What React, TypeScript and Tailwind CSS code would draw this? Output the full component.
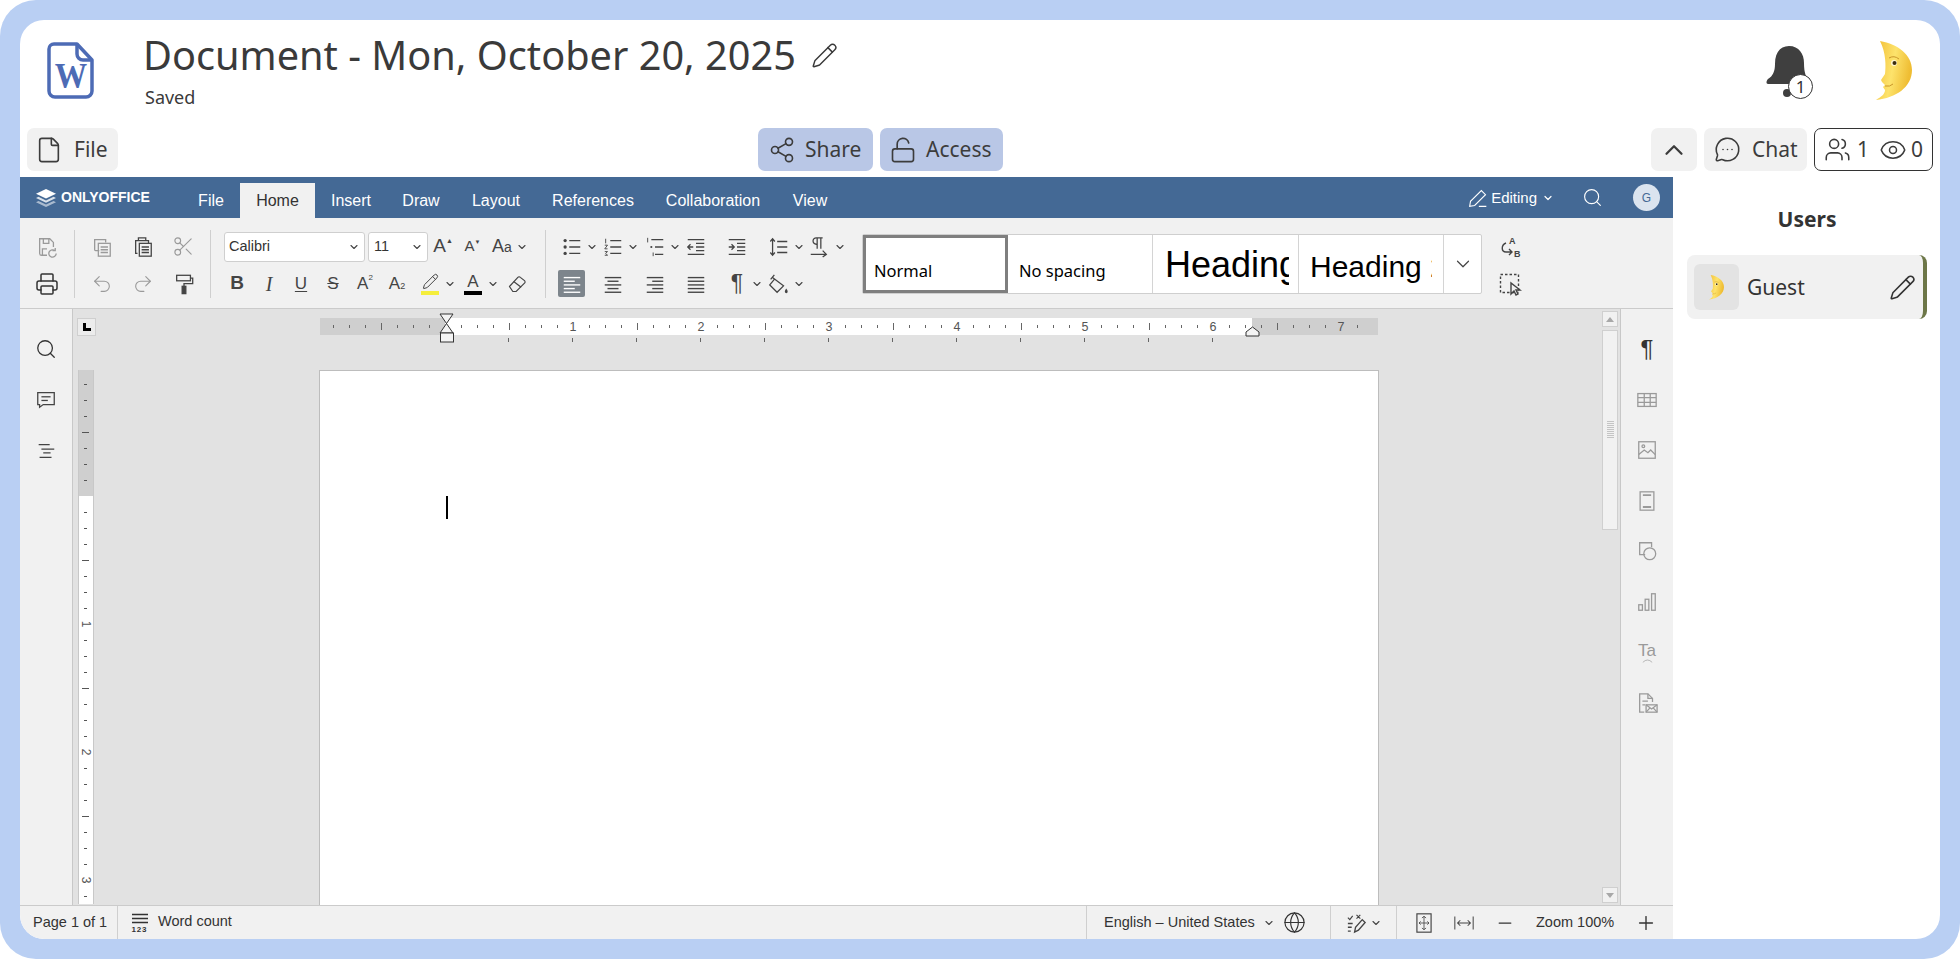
import type { ReactNode } from "react";
import {
  ChevronDown,
  ChevronUp,
  Eye,
  File,
  Globe,
  LockOpen,
  MessageCircleMore,
  Minus,
  Pencil,
  Plus,
  Printer,
  Redo2,
  Scissors,
  Search,
  Share2,
  Undo2,
  Users,
} from "lucide-react";

const sans = "font-['Liberation_Sans',Arial,sans-serif]";

function Moon({ className }: { className: string }) {
  return (
    <svg viewBox="0 0 36 60" className={className}>
      <defs>
        <linearGradient id="moonfill" x1="0" y1="0" x2="1" y2="0.3">
          <stop offset="0" stopColor="#f2bd33" />
          <stop offset="0.55" stopColor="#fde36c" />
          <stop offset="1" stopColor="#efbd33" />
        </linearGradient>
      </defs>
      <path
        d="M4 0C22 3 36 14 36 29C36 46 20 57 0 59C5 56 9 53 9 49L7 46L9 44L6 41L5 39L9 33C10 25 10 12 4 0Z"
        fill="url(#moonfill)"
      />
      <circle cx="18" cy="22" r="3" fill="#fff6d0" />
      <circle cx="18.5" cy="22" r="2" fill="#3a2c10" />
      <path d="M13 17Q18 14 23 18" stroke="#c9962a" strokeWidth="1" fill="none" />
      <path d="M9 45Q14 46 17 43" stroke="#c9962a" strokeWidth="1" fill="none" />
    </svg>
  );
}

function WordIcon() {
  return (
    <div className="relative w-[47px] h-[57px]">
      <svg viewBox="0 0 47 57" className="w-[47px] h-[57px]" fill="none" stroke="#4d6bb5" strokeWidth="3.5" strokeLinejoin="round">
        <path d="M7 2H30L45 18V49A6 6 0 0 1 39 55H8A6 6 0 0 1 2 49V7A5 5 0 0 1 7 2Z" />
        <path d="M30 2V12A6 6 0 0 0 36 18H45" />
      </svg>
      <span className="absolute left-[6px] top-[16px] scale-x-90 font-['Liberation_Serif',serif] font-bold text-[36px] leading-[36px] text-[#4d6bb5]">
        W
      </span>
    </div>
  );
}

function Bell() {
  return (
    <div className="relative w-[48px] h-[54px]">
      <svg viewBox="0 0 48 54" className="w-[48px] h-[54px]">
        <path
          d="M23 0C33 0 38 8 38 17C38 27 40 32 44 36V38H2C0 38 0 35 2 33C7 30 9 25 9 18C9 7 14 0 23 0Z"
          fill="#3f3f3f"
        />
        <circle cx="21" cy="47" r="4" fill="#3f3f3f" />
      </svg>
      <span className="absolute left-[22px] top-[28px] w-[25px] h-[25px] rounded-full bg-white border border-[#333] flex items-center justify-center text-[17px] leading-none text-[#333] font-['Noto_Sans',sans-serif]">
        1
      </span>
    </div>
  );
}

function HeadButton({ children, className }: { children: ReactNode; className: string }) {
  return (
    <button className={`h-[43px] rounded-[7px] flex items-center text-[21px] text-[#3c3c3c] ${className}`}>{children}</button>
  );
}

function Chev() {
  return (
    <span className="w-[10px] flex justify-center shrink-0">
      <ChevronDown size={12} strokeWidth={2.2} className="text-[#444] shrink-0" />
    </span>
  );
}

function Cell({ children, className = "w-[30px]" }: { children: ReactNode; className?: string }) {
  return <span className={`h-[37px] flex items-center justify-center shrink-0 text-[#444] ${sans} ${className}`}>{children}</span>;
}

function Svg({ children, size = 22, gray = false }: { children: ReactNode; size?: number; gray?: boolean }) {
  return (
    <svg
      viewBox="0 0 24 24"
      width={size}
      height={size}
      fill="none"
      stroke={gray ? "#9a9a9a" : "#444"}
      strokeWidth="1.4"
      className="shrink-0"
    >
      {children}
    </svg>
  );
}

function Lines({ x, rows, w }: { x: number; rows: number[]; w: number }) {
  return (
    <>
      {rows.map((y) => (
        <path key={y} d={`M${x} ${y}h${w}`} />
      ))}
    </>
  );
}

function AlignIcon({ kind, active }: { kind: "left" | "center" | "right" | "justify"; active?: boolean }) {
  const rows = [5, 9, 13, 17, 21];
  const width = [18, 12, 18, 12, 18];
  return (
    <svg viewBox="0 0 24 24" width={22} height={22} fill="none" stroke={active ? "#fff" : "#444"} strokeWidth="1.5">
      {rows.map((y, i) => {
        const w = kind === "justify" ? 18 : width[i];
        const x = kind === "left" ? 3 : kind === "right" ? 21 - w : 12 - w / 2;
        return <path key={y} d={`M${x} ${y}h${w}`} />;
      })}
    </svg>
  );
}

function Separator() {
  return <div className="w-px h-[68px] mt-[2px] bg-[#cfcfcf] shrink-0" />;
}

function Toolbar() {
  return (
    <div className="h-[91px] shrink-0 bg-[#f1f1f1] border-b border-[#cbcbcb] flex items-start pt-[10px]">
      {/* save / print */}
      <div className="w-[54px] flex flex-col items-center">
        <Cell>
          <Svg gray>
            <path d="M12 21H6a2 2 0 0 1-2-2V3h11l4 4v5" />
            <path d="M8 3v5h6V3M7 21v-7h5" />
            <path d="M22 19a4 4 0 1 1-1.2-2.8M21 13v3h-3" />
          </Svg>
        </Cell>
        <Cell>
          <Printer size={24} strokeWidth={1.5} className="text-[#333]" />
        </Cell>
      </div>
      <Separator />

      {/* clipboard */}
      <div className="w-[135px] pl-[6px] grid grid-cols-[41px_41px_41px]">
        <Cell className="w-[41px]">
          <Svg gray>
            <path d="M9 16H5a1 1 0 0 1-1-1V4h12v3" />
            <rect x="8" y="8" width="13" height="14" />
            <Lines x={10.5} rows={[12, 15, 18]} w={8} />
          </Svg>
        </Cell>
        <Cell className="w-[41px]">
          <Svg>
            <path d="M6 19H4V5h14v3" />
            <path d="M7 5V2h8v3" />
            <rect x="8" y="8" width="13" height="14" />
            <Lines x={10.5} rows={[12, 15, 18]} w={8} />
          </Svg>
        </Cell>
        <Cell className="w-[41px]">
          <Scissors size={23} strokeWidth={1.2} className="text-[#9a9a9a]" />
        </Cell>
        <Cell className="w-[41px]">
          <Undo2 size={22} strokeWidth={1.2} className="text-[#9a9a9a]" />
        </Cell>
        <Cell className="w-[41px]">
          <Redo2 size={22} strokeWidth={1.2} className="text-[#9a9a9a]" />
        </Cell>
        <Cell className="w-[41px]">
          <Svg>
            <rect x="4" y="2.5" width="15" height="6" />
            <path d="M19 5.5h2.5v6H12v3" />
            <rect x="10" y="14.5" width="4" height="8" fill="#444" />
          </Svg>
        </Cell>
      </div>
      <Separator />

      {/* font */}
      <div className="w-[334px] flex flex-col">
        <div className="flex items-center h-[37px]">
          <div className="ml-[13px] w-[141px] h-[30px] bg-white border border-[#cfcfcf] rounded-[3px] flex items-center justify-between pl-[4px] pr-[4px]">
            <span className={`${sans} text-[14.5px] text-[#333]`}>Calibri</span>
            <ChevronDown size={12} strokeWidth={2.2} className="text-[#444]" />
          </div>
          <div className="ml-[3px] w-[60px] h-[30px] bg-white border border-[#cfcfcf] rounded-[3px] flex items-center justify-between pl-[5px] pr-[4px]">
            <span className={`${sans} text-[14.5px] text-[#333]`}>11</span>
            <ChevronDown size={12} strokeWidth={2.2} className="text-[#444]" />
          </div>
          <Cell className="w-[28px] ml-[1px] text-[19px]">
            A<span className="text-[7px] -mt-[10px]">▲</span>
          </Cell>
          <Cell className="w-[29px] ml-[1px] text-[15px]">
            A<span className="text-[6px] -mt-[8px]">▼</span>
          </Cell>
          <Cell className="w-[30px] text-[18px]">
            A<span className="text-[14px] mt-[2px]">a</span>
          </Cell>
          <Chev />
        </div>
        <div className="flex items-center h-[37px]">
          <Cell className="w-[32px] ml-[10px] font-bold text-[19px] text-[#333]">B</Cell>
          <Cell className="w-[32px]">
            <span className="font-['Liberation_Serif',serif] italic text-[20px]">I</span>
          </Cell>
          <Cell className="w-[32px]">
            <span className="text-[17px] leading-[18px] underline underline-offset-2">U</span>
          </Cell>
          <Cell className="w-[32px]">
            <span className="text-[17px] line-through px-[1px]">S</span>
          </Cell>
          <Cell className="w-[32px] text-[17px]">
            A<sup className="text-[8px] -mt-[4px]">2</sup>
          </Cell>
          <Cell className="w-[32px] text-[17px]">
            A<sub className="text-[9px]">2</sub>
          </Cell>
          <Cell className="w-[30px] ml-[2px]">
            <span className="flex flex-col items-center">
              <Pencil size={17} strokeWidth={1.4} className="text-[#444]" />
              <span className="w-[18px] h-[4px] bg-[#f5ee3c] mt-[1px]" />
            </span>
          </Cell>
          <Chev />
          <Cell className="w-[30px] ml-[3px]">
            <span className="flex flex-col items-center">
              <span className="text-[17px] leading-[17px]">A</span>
              <span className="w-[18px] h-[4px] bg-black mt-[1px]" />
            </span>
          </Cell>
          <Chev />
          <Cell className="w-[30px] ml-[4px]">
            <Svg size={20}>
              <path d="M3 15 13 4a2 2 0 0 1 3 0l5 4a2 2 0 0 1 0 3L11 21H7Z" />
              <path d="M8 9l9 7" />
            </Svg>
          </Cell>
        </div>
      </div>
      <Separator />

      {/* paragraph */}
      <div className="w-[316px] flex flex-col">
        <div className="flex items-center h-[37px]">
          <Cell className="w-[30px] ml-[11px]">
            <Svg>
              <Lines x={9} rows={[5, 12, 19]} w={12} />
              <circle cx="4.5" cy="5" r="1.8" fill="#444" stroke="none" />
              <circle cx="4.5" cy="12" r="1.8" fill="#444" stroke="none" />
              <circle cx="4.5" cy="19" r="1.8" fill="#444" stroke="none" />
            </Svg>
          </Cell>
          <Chev />
          <Cell className="w-[30px] ml-px">
            <Svg>
              <Lines x={9} rows={[5, 12, 19]} w={12} />
              <path d="M4 3v5M3 10h3l-3 4h3M3 17h3l-2 2 2 2H3" strokeWidth="1" />
            </Svg>
          </Cell>
          <Chev />
          <Cell className="w-[30px] ml-[2px]">
            <Svg>
              <Lines x={8} rows={[4]} w={13} />
              <Lines x={12} rows={[12, 20]} w={9} />
              <path d="M4 2v5" strokeWidth="1" />
              <circle cx="8" cy="12" r="1.2" fill="#444" stroke="none" />
              <path d="M10 18v4" strokeWidth="1" />
            </Svg>
          </Cell>
          <Chev />
          <Cell className="w-[30px] ml-px">
            <Svg>
              <Lines x={3} rows={[4, 20]} w={18} />
              <Lines x={12} rows={[8, 12, 16]} w={9} />
              <path d="M9 12H3M6 9l-3 3 3 3" />
            </Svg>
          </Cell>
          <Cell className="w-[30px] ml-[11px]">
            <Svg>
              <Lines x={3} rows={[4, 20]} w={18} />
              <Lines x={12} rows={[8, 12, 16]} w={9} />
              <path d="M3 12h6M6 9l3 3-3 3" />
            </Svg>
          </Cell>
          <Cell className="w-[30px] ml-[12px]">
            <Svg>
              <path d="M5 3v18M2.5 6 5 3l2.5 3M2.5 18 5 21l2.5-3" />
              <Lines x={10} rows={[6, 12, 18]} w={11} />
            </Svg>
          </Cell>
          <Chev />
          <Cell className="w-[30px]">
            <Svg>
              <path d="M10 2v12M14 2v12M16 2H9a3.5 3.5 0 0 0 0 7h1" />
              <path d="M3 20h17M16 16l4 4-4 3" />
            </Svg>
          </Cell>
          <Cell className="w-[10px] ml-px">
            <Chev />
          </Cell>
        </div>
        <div className="flex items-center h-[37px]">
          <span className="ml-[12px] w-[27px] h-[27px] rounded-[2px] bg-[#7d858c] flex items-center justify-center shrink-0">
            <AlignIcon kind="left" active />
          </span>
          <Cell className="w-[30px] ml-[13px]">
            <AlignIcon kind="center" />
          </Cell>
          <Cell className="w-[30px] ml-[12px]">
            <AlignIcon kind="right" />
          </Cell>
          <Cell className="w-[30px] ml-[11px]">
            <AlignIcon kind="justify" />
          </Cell>
          <Cell className="w-[30px] ml-[11px] text-[23px] text-[#333]">¶</Cell>
          <Chev />
          <Cell className="w-[30px] ml-px">
            <Svg>
              <path d="M8 2 4 7M6 5 18 14l-7 7-8-8 5-6" />
              <path d="M21 17c1.5 2 1.5 3 1.5 3.5a1.5 1.5 0 0 1-3 0c0-.5 0-1.5 1.5-3.5Z" fill="#444" stroke="none" />
            </Svg>
          </Cell>
          <Cell className="w-[10px] ml-px">
            <Chev />
          </Cell>
        </div>
      </div>

      {/* styles */}
      <div className="mt-[6px] w-[620px] h-[60px] flex bg-white border border-[#cfcfcf] rounded-[2px] shrink-0 text-black">
        <div className="w-[145px] border-[3px] border-[#7f7f7f] flex items-end pl-[8px] pb-[6px] font-['Noto_Sans',sans-serif] text-[16.5px]">
          Normal
        </div>
        <div className="w-[145px] border-r border-[#d4d4d4] flex items-end pl-[11px] pb-[9px] font-['Noto_Sans',sans-serif] text-[16.5px]">
          No spacing
        </div>
        <div className={`w-[146px] border-r border-[#d4d4d4] flex items-center pl-[12px] pr-[9px] pt-[2px] text-[36px] ${sans}`}>
          <div className="overflow-hidden whitespace-nowrap">Heading 1</div>
        </div>
        <div className={`w-[145px] border-r border-[#d4d4d4] flex items-center pl-[11px] pr-[11px] pt-[5px] text-[30px] ${sans}`}>
          <div className="overflow-hidden whitespace-nowrap">Heading 2</div>
        </div>
        <div className="flex-1 flex items-center justify-center">
          <ChevronDown size={22} strokeWidth={1.3} className="text-[#444]" />
        </div>
      </div>

      {/* replace / select */}
      <div className="ml-[13px] w-[30px] flex flex-col">
        <Cell>
          <Svg size={24}>
            <path d="M8 8C3 10 3 17 8 17h6M11 14l3 3-3 3" />
            <text x="11" y="9" fontSize="9" fontWeight="700" fill="#444" stroke="none" fontFamily="Liberation Sans">A</text>
            <text x="16" y="22" fontSize="9" fontWeight="700" fill="#444" stroke="none" fontFamily="Liberation Sans">B</text>
          </Svg>
        </Cell>
        <Cell>
          <Svg size={24}>
            <rect x="2.5" y="2.5" width="18" height="18" strokeDasharray="2.5 2" />
            <path d="M13 11v11l3-3 2 4 2-1-2-4h4Z" fill="#f1f1f1" />
          </Svg>
        </Cell>
      </div>
    </div>
  );
}

function RibbonBar() {
  const tabs = [
    ["File", "w-[52px]"],
    ["Home", "w-[75px] ml-[3px]"],
    ["Insert", "w-[72px]"],
    ["Draw", "w-[68px]"],
    ["Layout", "w-[82px]"],
    ["References", "w-[112px]"],
    ["Collaboration", "w-[128px]"],
    ["View", "w-[66px]"],
  ];
  return (
    <div className={`h-[41px] shrink-0 bg-[#446995] flex text-white ${sans}`}>
      <div className="w-[165px] pl-[16px] flex items-center gap-[5px]">
        <svg viewBox="0 0 20 18" className="w-[20px] h-[18px] shrink-0">
          <path d="M10 0l10 4.8-10 4.8L0 4.8Z" fill="#fff" />
          <path d="M2.5 7.8 0 9l10 4.8L20 9l-2.5-1.2L10 11.4Z" fill="#fff" opacity=".8" />
          <path d="M2.5 12 0 13.2 10 18l10-4.8L17.5 12 10 15.6Z" fill="#fff" opacity=".55" />
        </svg>
        <span className="font-bold text-[14px] leading-none -mt-[2px]">ONLYOFFICE</span>
      </div>
      <div className="flex items-end">
        {tabs.map(([name, width]) => (
          <div
            key={name}
            className={`h-[35px] flex items-center justify-center text-[16px] pt-[1px] ${width} ${
              name === "Home" ? "bg-[#f1f1f1] text-[#333]" : ""
            }`}
          >
            {name}
          </div>
        ))}
      </div>
      <div className="ml-auto flex items-center pr-[13px]">
        <svg viewBox="0 0 24 24" className="w-[20px] h-[20px] mr-[3px]" fill="none" stroke="#fff" strokeWidth="1.3">
          <path d="M2 22l1-6L16 3l5 5L8 21ZM13 22h9" />
        </svg>
        <span className="text-[15px] mt-[1px]">Editing</span>
        <ChevronDown size={12} strokeWidth={2.4} className="ml-[5px]" />
        <Search size={21} strokeWidth={1.3} className="ml-[28px]" />
        <span className="ml-[30px] w-[27px] h-[27px] rounded-full bg-[#dbe4ef] text-[#446995] text-[12px] flex items-center justify-center">
          G
        </span>
      </div>
    </div>
  );
}

function HRuler() {
  const ticks = Array.from({ length: 65 }, (_, i) => i - 7).filter((k) => k !== 0);
  const stops = Array.from({ length: 12 }, (_, i) => i + 1);
  return (
    <svg width={1058} height={17} className="overflow-visible shrink-0">
      <rect width="1058" height="17" fill="#cfcfcf" />
      <rect x="125" width="807" height="17" fill="#fff" />
      {ticks.map((k) => {
        const x = 125 + k * 16;
        if (k % 8 === 0) {
          return (
            <text key={k} x={x} y="13" fontSize="12.5" fill="#555" textAnchor="middle" fontFamily="Liberation Sans">
              {k / 8}
            </text>
          );
        }
        const long = k % 4 === 0;
        return <rect key={k} x={x} y={long ? 5 : 7} width="1" height={long ? 7 : 3} fill="#666" />;
      })}
      {stops.map((s) => (
        <rect key={s} x={125 + s * 64 - 1} y="20" width="1" height="4" fill="#666" />
      ))}
      <path d="M120 -4H133L120 15H133Z" fill="#f4f4f4" stroke="#333" />
      <rect x="120.5" y="15" width="13" height="9" fill="#f4f4f4" stroke="#333" />
      <path d="M926 18V14L932.5 9L939 14V18Z" fill="#f4f4f4" stroke="#333" />
    </svg>
  );
}

function VRuler() {
  const ticks = Array.from({ length: 33 }, (_, i) => i - 7).filter((k) => k !== 0);
  return (
    <svg width={16} height={534} className="shrink-0">
      <rect width="16" height="534" fill="#fff" />
      <rect width="16" height="126" fill="#cfcfcf" />
      <path d="M0.5 0V534M15.5 0V534" stroke="#c8c8c8" />
      {ticks.map((k) => {
        const y = 126 + k * 16;
        if (k % 8 === 0) {
          return (
            <text key={k} x="0" y="0" transform={`translate(4 ${y}) rotate(90)`} fontSize="12" fill="#555" textAnchor="middle" fontFamily="Liberation Sans">
              {k / 8}
            </text>
          );
        }
        const long = k % 4 === 0;
        return <rect key={k} x={long ? 4 : 6} y={y} width={long ? 7 : 3} height="1" fill="#555" />;
      })}
    </svg>
  );
}

function ScrollColumn() {
  return (
    <div className="w-[16px] mr-[2px] pt-[2px] pb-[2px] flex flex-col shrink-0">
      <div className="h-[16px] bg-[#f1f1f1] border border-[#cfcfcf] flex items-center justify-center">
        <span className="w-0 h-0 border-x-[4px] border-x-transparent border-b-[5px] border-b-[#a8a8a8]" />
      </div>
      <div className="mt-[3px] h-[200px] bg-[#f1f1f1] border border-[#cfcfcf] flex items-center justify-center">
        <span className="w-[7px] h-[18px] bg-[repeating-linear-gradient(#c4c4c4_0_1px,transparent_1px_2px)]" />
      </div>
      <div className="flex-1" />
      <div className="h-[16px] bg-[#f1f1f1] border border-[#cfcfcf] flex items-center justify-center">
        <span className="w-0 h-0 border-x-[4px] border-x-transparent border-t-[5px] border-t-[#a8a8a8]" />
      </div>
    </div>
  );
}

function LeftRail() {
  return (
    <div className="w-[53px] shrink-0 bg-[#f1f1f1] border-r border-[#c8c8c8] flex flex-col items-center pt-[29px] gap-[29px]">
      <Search size={22} strokeWidth={1.4} className="text-[#333]" />
      <Svg>
        <path d="M3 4h18v13H9l-4 3v-3H3Z" />
        <Lines x={7} rows={[8.5]} w={10} />
        <Lines x={7} rows={[12.5]} w={7} />
      </Svg>
      <Svg>
        <path d="M4 5h12M7 10h14M9 14h8M5 19h13" />
      </Svg>
    </div>
  );
}

function RightRail() {
  return (
    <div className="w-[53px] shrink-0 bg-[#f1f1f1] border-l border-[#c8c8c8] flex flex-col items-center pt-[28px] gap-[28.5px]">
      <span className={`h-[23px] flex items-center text-[24px] leading-none text-[#333] ${sans}`}>¶</span>
      <Svg gray>
        <rect x="2" y="5" width="20" height="14" />
        <path d="M2 9.5h20M2 14.5h20M9 5v14M15.5 5v14" />
      </Svg>
      <Svg gray>
        <rect x="3" y="3" width="18" height="18" />
        <circle cx="8" cy="8" r="1.5" />
        <path d="M3 17l6-5 4 3 3-3 5 5" />
      </Svg>
      <Svg gray>
        <rect x="4.5" y="2" width="15" height="20" />
        <path d="M7.5 5.5h9M7.5 18.5h9" strokeWidth="2" />
      </Svg>
      <Svg gray>
        <path d="M10 16H4V3h13v5" />
        <circle cx="15" cy="15" r="6.5" />
      </Svg>
      <Svg gray>
        <rect x="3" y="15" width="4" height="6" />
        <rect x="10" y="9" width="4" height="12" />
        <rect x="17" y="3" width="4" height="18" />
      </Svg>
      <span className={`h-[22px] w-[22px] pt-[2px] flex flex-col items-center text-[17px] leading-[16px] text-[#9a9a9a] ${sans}`}>
        Ta
        <svg viewBox="0 0 16 6" className="w-[15px] h-[6px]" fill="none" stroke="#9a9a9a">
          <path d="M1 5Q8 -2 15 5" />
        </svg>
      </span>
      <Svg gray>
        <path d="M9 22H4V2h9l5 5v4" />
        <path d="M13 2v5h5M7 10h6M7 14h3" />
        <rect x="11" y="14" width="12" height="8" />
        <path d="M11 14l6 4.5 6-4.5M11 22l4.5-5M23 22l-4.5-5" />
      </Svg>
    </div>
  );
}

function StatusBar() {
  return (
    <div className={`h-[34px] shrink-0 bg-[#f1f1f1] border-t border-[#cbcbcb] flex items-center text-[14.5px] text-[#333] ${sans}`}>
      <div className="w-[98px] h-full border-r border-[#cfcfcf] pl-[13px] flex items-center shrink-0">Page 1 of 1</div>
      <svg viewBox="0 0 18 20" className="ml-[13px] w-[18px] h-[20px]">
        <path d="M1 1.5h16M1 5.5h16M1 9.5h16" stroke="#333" strokeWidth="1.3" />
        <text x="0.5" y="19" fontSize="8" fontWeight="700" letterSpacing="0.8" fill="#333" fontFamily="Liberation Sans">123</text>
      </svg>
      <span className="ml-[9px] -mt-[1px]">Word count</span>
      <div className="ml-auto h-full flex items-center">
        <div className="w-[244px] h-full border-l border-[#cfcfcf] pl-[17px] flex items-center">
          <span>English – United States</span>
          <ChevronDown size={12} strokeWidth={2.2} className="ml-[8px] text-[#444]" />
          <Globe size={23} strokeWidth={1.2} className="ml-[8px] text-[#333]" />
        </div>
        <div className="w-[66px] h-full border-l border-[#cfcfcf] pl-[14px] flex items-center">
          <Svg size={23}>
            <path d="M3 7l2 2 3-4M12 4l4 4M16 4l-4 4" strokeWidth="1.2" />
            <path d="M3 13h5M3 17h4M3 21h3" />
            <path d="M10 22l1-5 7-8 3 3-7 8Z" />
          </Svg>
          <ChevronDown size={12} strokeWidth={2.2} className="ml-[2px] text-[#444]" />
        </div>
        <div className="w-[277px] h-full border-l border-[#cfcfcf] pl-[17px] flex items-center">
          <Svg size={20}>
            <rect x="3.5" y="1" width="17" height="22" />
            <path d="M12 4v16M9.5 6 12 4l2.5 2M9.5 18l2.5 2 2.5-2M6 12h12M8 10l-2 2 2 2M16 10l2 2-2 2" strokeWidth="1" />
          </Svg>
          <span className="ml-[19px] shrink-0">
            <Svg size={22}>
              <path d="M2 5v14M22 5v14M5 12h14M8 9l-3 3 3 3M16 9l3 3-3 3" strokeWidth="1.1" />
            </Svg>
          </span>
          <Minus size={20} strokeWidth={1.5} className="ml-[20px]" />
          <span className="ml-[21px]">Zoom 100%</span>
          <Plus size={22} strokeWidth={1.5} className="ml-[21px]" />
        </div>
      </div>
    </div>
  );
}

function Editor() {
  return (
    <div className="w-[1653px] shrink-0 flex flex-col rounded-bl-[24px] overflow-hidden">
      <RibbonBar />
      <Toolbar />
      <div className="flex-1 min-h-0 flex">
        <LeftRail />
        <div className="flex-1 min-w-0 bg-[#e2e2e2] flex">
          <div className="flex-1 min-w-0 flex flex-col">
            <div className="h-[61px] shrink-0 flex items-start pt-[9px]">
              <div className="ml-[4px] w-[19px] h-[18px] bg-[#ececec] border border-[#cfcfcf] flex items-center justify-center shrink-0">
                <span className="w-[8px] h-[8px] border-l-[3px] border-b-[3px] border-black" />
              </div>
              <div className="ml-[224px]">
                <HRuler />
              </div>
            </div>
            <div className="flex-1 min-h-0 flex overflow-hidden">
              <div className="ml-[5px]">
                <VRuler />
              </div>
              <div className="ml-[225px] w-[1060px] bg-white border border-b-0 border-[#bdbdbd] pl-[126px] pt-[125px]">
                <div className="w-[2px] h-[23px] bg-black" />
              </div>
            </div>
          </div>
          <ScrollColumn />
        </div>
        <RightRail />
      </div>
      <StatusBar />
    </div>
  );
}

function UsersPanel() {
  return (
    <div className="flex-1 pt-[28px] px-[14px] font-['Noto_Sans',sans-serif] text-[#333]">
      <div className="text-center text-[21px] leading-[28px] font-bold">Users</div>
      <div className="mt-[22px] w-[240px] h-[64px] bg-[#f1f1f1] rounded-[8px] border-r-[4px] border-[#6d7748] flex items-center pl-[7px] pr-[7px]">
        <div className="w-[45px] h-[46px] rounded-[6px] bg-[#e3e3e3] flex items-center justify-center">
          <Moon className="w-[15px] h-[25px]" />
        </div>
        <span className="ml-[8px] text-[21px] mt-[1px]">Guest</span>
        <Pencil size={27} strokeWidth={1.4} className="ml-auto text-[#333]" />
      </div>
    </div>
  );
}

export default function App() {
  return (
    <div className="w-full h-screen bg-white overflow-hidden font-['Noto_Sans',sans-serif]">
      <div className="w-full h-full bg-[#b9cff3] rounded-[36px] p-5">
        <div className="w-full h-full bg-white rounded-[24px] overflow-hidden flex flex-col">
          {/* Title row */}
          <header className="h-[108px] shrink-0 flex items-start">
            <div className="ml-[27px] mt-[22px]">
              <WordIcon />
            </div>
            <div className="ml-[49px] mt-[8px]">
              <div className="flex items-center">
                <h1 className="text-[39.7px] leading-[54px] text-[#3a3a3a]">Document - Mon, October 20, 2025</h1>
                <Pencil size={27} strokeWidth={1.3} className="ml-[15px] text-[#3a3a3a]" />
              </div>
              <div className="mt-[3px] ml-[2px] text-[18px] leading-[24px] text-[#3a3a3a]">Saved</div>
            </div>
            <div className="ml-auto mt-[26px]">
              <Bell />
            </div>
            <div className="ml-[62px] mr-[28px] mt-[21px]">
              <Moon className="w-[36px] h-[60px]" />
            </div>
          </header>

          {/* Buttons row */}
          <div className="h-[49px] shrink-0 flex items-start">
            <HeadButton className="ml-[7px] w-[91px] bg-[#f1f1f1] pl-[8px] gap-[11px]">
              <File size={28} strokeWidth={1.4} />
              File
            </HeadButton>
            <HeadButton className="ml-[640px] w-[115px] bg-[#b9c7e6] pl-[10px] gap-[9px]">
              <Share2 size={28} strokeWidth={1.4} />
              Share
            </HeadButton>
            <HeadButton className="ml-[7px] w-[123px] bg-[#b9c7e6] pl-[9px] gap-[9px]">
              <LockOpen size={28} strokeWidth={1.4} />
              Access
            </HeadButton>
            <HeadButton className="ml-auto w-[46px] bg-[#f1f1f1] justify-center">
              <ChevronUp size={30} strokeWidth={1.8} />
            </HeadButton>
            <HeadButton className="ml-[7px] w-[103px] bg-[#f1f1f1] pl-[10px] gap-[11px]">
              <MessageCircleMore size={27} strokeWidth={1.4} />
              Chat
            </HeadButton>
            <div className="ml-[7px] mr-[7px] w-[119px] h-[43px] border border-[#333] rounded-[7px] flex items-center pl-[9px] text-[21px] text-[#3c3c3c]">
              <Users size={27} strokeWidth={1.4} />
              <span className="ml-[6px]">1</span>
              <Eye size={28} strokeWidth={1.3} className="ml-[10px]" />
              <span className="ml-[4px]">0</span>
            </div>
          </div>

          <div className="flex-1 min-h-0 flex">
            <Editor />
            <UsersPanel />
          </div>
        </div>
      </div>
    </div>
  );
}
